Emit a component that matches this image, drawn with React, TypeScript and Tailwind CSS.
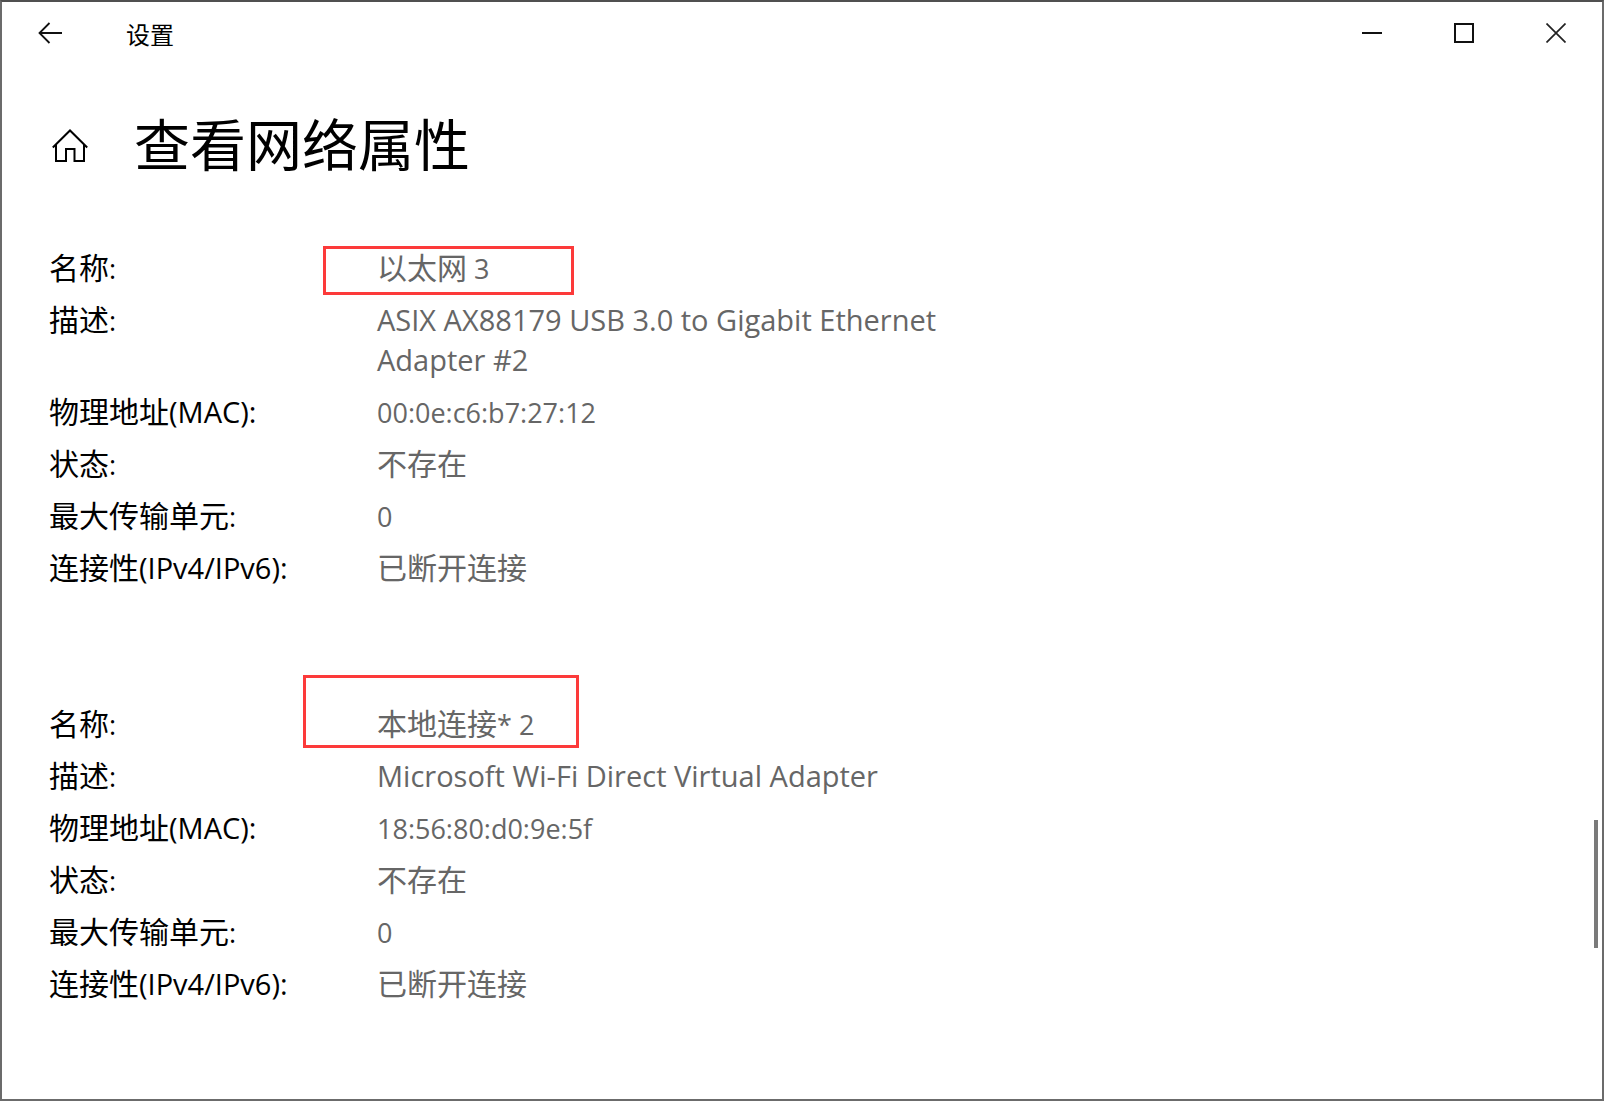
import React from "react";

type Row = { label: string; value: string; highlight?: string };

const adapters: Row[][] = [
  [
    { label: "名称:", value: "以太网 3", highlight: "left-[321px] -top-[2px] h-[49px] w-[251px]" },
    { label: "描述:", value: "ASIX AX88179 USB 3.0 to Gigabit Ethernet Adapter #2" },
    { label: "物理地址(MAC):", value: "00:0e:c6:b7:27:12" },
    { label: "状态:", value: "不存在" },
    { label: "最大传输单元:", value: "0" },
    { label: "连接性(IPv4/IPv6):", value: "已断开连接" },
  ],
  [
    { label: "名称:", value: "本地连接* 2", highlight: "left-[301px] -top-[29px] h-[73px] w-[276px]" },
    { label: "描述:", value: "Microsoft Wi-Fi Direct Virtual Adapter" },
    { label: "物理地址(MAC):", value: "18:56:80:d0:9e:5f" },
    { label: "状态:", value: "不存在" },
    { label: "最大传输单元:", value: "0" },
    { label: "连接性(IPv4/IPv6):", value: "已断开连接" },
  ],
];

/* Latin words and numbers are set slightly smaller than the Chinese text around them. */
function Mixed({ text }: { text: string }) {
  const runs = text.match(/[\u4e00-\u9fff]+|[^\u4e00-\u9fff]+/g) ?? [];
  return (
    <>
      {runs.map((run, i) =>
        /[\u4e00-\u9fff]/.test(run) ? (
          <React.Fragment key={i}>{run}</React.Fragment>
        ) : (
          <span key={i} className={/[A-Z]/.test(run) ? "text-[29px] leading-7" : "text-[27px] leading-7"}>
            {run}
          </span>
        ),
      )}
    </>
  );
}

function Adapter({ rows }: { rows: Row[] }) {
  return (
    <dl className="flex flex-col gap-3 text-[30px] leading-10">
      {rows.map((row) => (
        <div key={row.label} className="relative flex pl-[47px]">
          <dt className="w-[328px] shrink-0 text-black">
            <Mixed text={row.label} />
          </dt>
          <dd className="max-w-[580px] text-[#666666]">
            <Mixed text={row.value} />
          </dd>
          {row.highlight && (
            <span className={`pointer-events-none absolute border-[3px] border-[#fc3a3a] ${row.highlight}`} />
          )}
        </div>
      ))}
    </dl>
  );
}

export default function App() {
  return (
    <div className="relative flex min-h-screen flex-col border-2 border-[#6b6b6b] border-t-[#505050] bg-white font-['Open_Sans','Noto_Sans_CJK_SC',sans-serif] text-black">
      <header className="flex h-[62px] items-center justify-between">
        <div className="flex items-center">
          <button type="button" aria-label="返回" className="flex h-[62px] w-24 items-center justify-center">
            <svg width="24" height="22" viewBox="0 0 24 22" fill="none" stroke="#111" strokeWidth="1.8">
              <path d="M24 11H1.5M11.5 1L1.5 11l10 10" />
            </svg>
          </button>
          <span className="ml-7 pt-1 text-2xl">设置</span>
        </div>
        <div className="flex">
          <button type="button" aria-label="最小化" className="flex h-[62px] w-[92px] items-center justify-center">
            <svg width="20" height="20" viewBox="0 0 20 20" fill="none" stroke="#111" strokeWidth="2">
              <path d="M0 10h20" />
            </svg>
          </button>
          <button type="button" aria-label="最大化" className="flex h-[62px] w-[92px] items-center justify-center">
            <svg width="20" height="20" viewBox="0 0 20 20" fill="none" stroke="#111" strokeWidth="2">
              <path d="M1 1h18v18H1z" />
            </svg>
          </button>
          <button type="button" aria-label="关闭" className="flex h-[62px] w-[92px] items-center justify-center">
            <svg width="20" height="20" viewBox="0 0 20 20" fill="none" stroke="#222" strokeWidth="1.7">
              <path d="M.5.5l19 19M19.5.5l-19 19" />
            </svg>
          </button>
        </div>
      </header>

      <main className="flex flex-col">
        <div className="flex items-center pt-10 pl-[50px]">
          <a href="#home" aria-label="主页" className="mr-[46px]">
            <svg width="36" height="34" viewBox="0 0 36 34" fill="none" stroke="#000" strokeWidth="2">
              <path d="M.8 18.5L18 1.5l17.2 17M4 15.5V32h10V20h8.500v12H32V15.5" />
            </svg>
          </a>
          <h1 className="pb-1 text-[56px] leading-[80px]">查看网络属性</h1>
        </div>
        <div className="flex flex-col gap-[116px] pt-[60px] pb-20">
          {adapters.map((rows, i) => (
            <Adapter key={i} rows={rows} />
          ))}
        </div>
      </main>

      <div className="absolute top-[818px] right-1 h-[128px] w-1 bg-[#7a7a7a]" />
    </div>
  );
}
